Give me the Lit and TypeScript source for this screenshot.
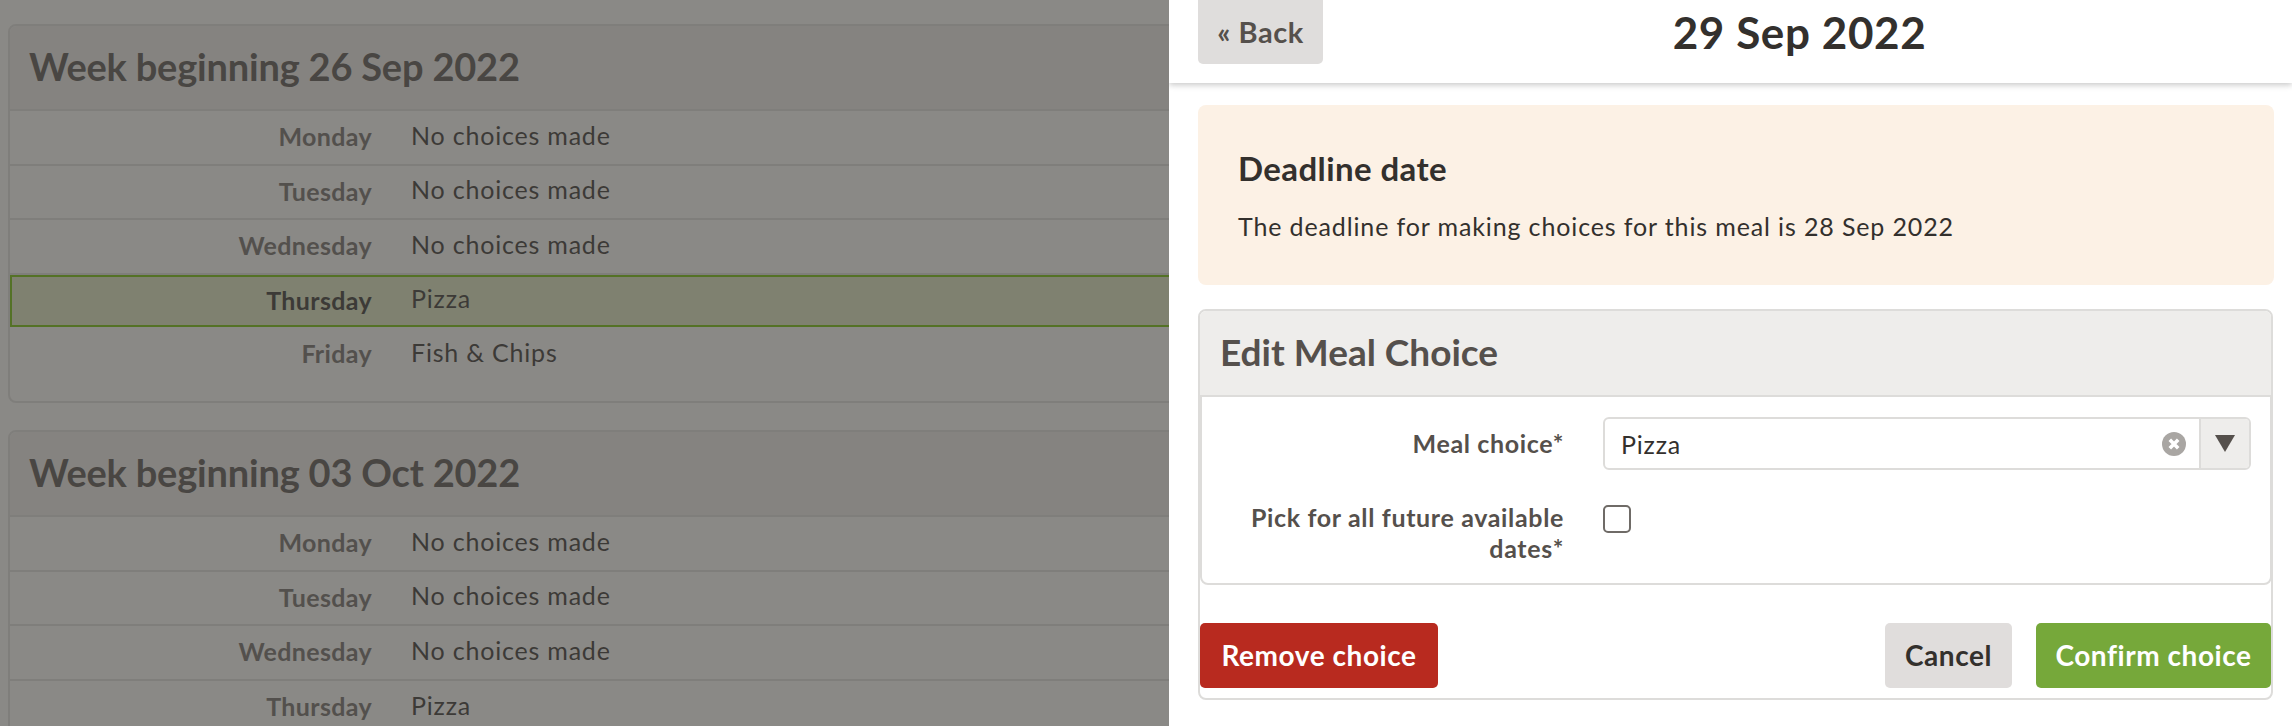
import { LitElement, css, html } from 'lit';
import { customElement } from 'lit/decorators.js';

const WEEKS = [
  {
    title: 'Week beginning 26 Sep 2022',
    days: [
      ['Monday', 'No choices made'],
      ['Tuesday', 'No choices made'],
      ['Wednesday', 'No choices made'],
      ['Thursday', 'Pizza', true],
      ['Friday', 'Fish & Chips'],
    ],
  },
  {
    title: 'Week beginning 03 Oct 2022',
    days: [
      ['Monday', 'No choices made'],
      ['Tuesday', 'No choices made'],
      ['Wednesday', 'No choices made'],
      ['Thursday', 'Pizza'],
    ],
  },
];

@customElement('app-root')
export class AppRoot extends LitElement {
  render() {
    return html`
      <div class="backdrop">
        ${WEEKS.map(
          (week) => html`
            <section class="week">
              <h2>${week.title}</h2>
              ${week.days.map(
                ([day, choice, current]) => html`
                  <div class="day ${current ? 'current' : ''}">
                    <span class="day-name">${day}</span>
                    <span class="day-choice">${choice}</span>
                  </div>
                `,
              )}
            </section>
          `,
        )}
      </div>

      <aside class="panel">
        <header class="top">
          <button class="btn back">« Back</button>
          <h1>29 Sep 2022</h1>
        </header>

        <div class="alert">
          <h3>Deadline date</h3>
          <p>The deadline for making choices for this meal is 28 Sep 2022</p>
        </div>

        <section class="edit">
          <h2>Edit Meal Choice</h2>
          <div class="fields">
            <div class="field">
              <label>Meal choice*</label>
              <div class="select">
                <span class="select-value">Pizza</span>
                <svg class="clear" width="24" height="24" viewBox="0 0 24 24">
                  <circle cx="12" cy="12" r="12" fill="#a9a6a3" />
                  <path d="M7.8 7.8l8.4 8.4M16.2 7.8l-8.4 8.4" stroke="#fff" stroke-width="3.6" />
                </svg>
                <span class="arrow">
                  <svg width="20" height="17" viewBox="0 0 20 17">
                    <path d="M0 0h20L10 17z" fill="#55504c" />
                  </svg>
                </span>
              </div>
            </div>
            <div class="field tall">
              <label>Pick for all future available<br />dates*</label>
              <span class="check"></span>
            </div>
          </div>
          <div class="actions">
            <button class="btn remove">Remove choice</button>
            <span class="spacer"></span>
            <button class="btn cancel">Cancel</button>
            <button class="btn confirm">Confirm choice</button>
          </div>
        </section>
      </aside>
    `;
  }

  static styles = css`
    :host {
      display: flex;
      width: 2292px;
      height: 726px;
      overflow: hidden;
      font-family: 'Lato', 'Noto Sans', sans-serif;
      font-size: 25px;
      letter-spacing: 0.8px;
      color: #33302d;
      background: #fff;
    }

    h1,
    h2,
    h3,
    p {
      margin: 0;
    }

    .backdrop {
      position: relative;
      flex: 0 0 1169px;
      box-sizing: border-box;
      padding: 24px 0 0 8px;
      overflow: hidden;
      background: #fcfbf9;
    }

    .backdrop::after {
      content: '';
      position: absolute;
      inset: 0;
      background: rgba(67, 65, 62, 0.617);
    }

    .week {
      width: 1400px;
      height: 379px;
      box-sizing: border-box;
      margin-bottom: 27px;
      border: 2px solid #e0dfdd;
      border-radius: 8px;
      overflow: hidden;
    }

    .week h2 {
      display: flex;
      align-items: center;
      height: 83px;
      padding: 0 0 3px 19px;
      box-sizing: border-box;
      font-size: 38px;
      font-weight: 700;
      letter-spacing: -0.2px;
      color: #55504c;
      background: #eeedeb;
    }

    .day {
      display: grid;
      grid-template-columns: 362px 1fr;
      column-gap: 39px;
      align-items: center;
      height: 54.6px;
      box-sizing: border-box;
      border-top: 2px solid #e0dfdd;
    }

    .day-name {
      margin-top: -2px;
      text-align: right;
      font-weight: 700;
      letter-spacing: 0.35px;
      color: #6e6a66;
    }

    .day-choice {
      margin-top: -5px;
    }

    .day.current {
      grid-template-columns: 360px 1fr;
      height: 52px;
      margin-top: 2px;
      border: 2px solid #70c000;
      background: #dfe8c1;
      box-shadow: 0 -2px 0 #e0dfdd;
    }

    .day.current .day-name {
      color: #33302d;
    }

    .day.current + .day {
      border-top: 0;
    }

    .panel {
      flex: 1;
      min-width: 0;
      background: #fff;
    }

    .top {
      display: flex;
      height: 83px;
      padding-left: 29px;
      box-shadow: 0 2px 6px rgba(0, 0, 0, 0.22);
    }

    .top h1 {
      flex: 1;
      padding: 6px 16px 0 0;
      text-align: center;
      font-size: 44px;
      font-weight: 700;
      letter-spacing: 0.6px;
    }

    .btn {
      height: 65px;
      padding: 0 0 2px;
      border: 0;
      border-radius: 5px;
      font: inherit;
      font-size: 28px;
      font-weight: 700;
      letter-spacing: 0.55px;
    }

    .back {
      width: 125px;
      height: 64px;
      font-size: 29px;
      color: #55504c;
      background: #dfdddc;
      border-radius: 0 0 5px 5px;
    }

    .alert {
      box-sizing: border-box;
      width: 1076px;
      height: 180px;
      margin: 22px 0 24px 29px;
      padding: 43px 40px 0;
      border-radius: 8px;
      background: #fcf1e5;
    }

    .alert h3 {
      font-size: 33px;
      font-weight: 700;
      letter-spacing: 0.4px;
    }

    .alert p {
      margin-top: 23px;
      letter-spacing: 0.87px;
    }

    .edit {
      box-sizing: border-box;
      width: 1075px;
      height: 391px;
      margin-left: 29px;
      border: 2px solid #dddcda;
      border-radius: 8px;
    }

    .edit h2 {
      display: flex;
      align-items: center;
      height: 84px;
      padding: 0 0 3px 20px;
      box-sizing: border-box;
      font-size: 37px;
      font-weight: 700;
      letter-spacing: 0;
      color: #55504c;
      background: #eeedeb;
      border-radius: 6px 6px 0 0;
    }

    .fields {
      box-sizing: border-box;
      height: 190px;
      margin-right: -1px;
      padding-top: 20px;
      border: 2px solid #dddcda;
      border-radius: 0 0 8px 8px;
    }

    .field {
      display: grid;
      grid-template-columns: 362px 1fr;
      column-gap: 39px;
      align-items: center;
    }

    .field.tall {
      align-items: start;
      margin-top: 32px;
    }

    label {
      text-align: right;
      font-weight: 700;
      line-height: 31px;
      letter-spacing: 0.65px;
      color: #55504c;
    }

    .select {
      display: flex;
      align-items: center;
      box-sizing: border-box;
      width: 648px;
      height: 53px;
      border: 2px solid #dddcda;
      border-radius: 6px;
      overflow: hidden;
    }

    .select-value {
      flex: 1;
      padding-left: 16px;
    }

    .clear {
      margin-right: 13px;
    }

    .arrow {
      display: flex;
      align-items: center;
      justify-content: center;
      width: 48px;
      height: 100%;
      border-left: 2px solid #dddcda;
      background: #eeedeb;
    }

    .check {
      box-sizing: border-box;
      width: 28px;
      height: 28px;
      margin-top: 3px;
      border: 2px solid #6f6b67;
      border-radius: 5px;
    }

    .actions {
      display: flex;
      gap: 24px;
      margin-top: 38px;
    }

    .spacer {
      flex: 1;
    }

    .remove {
      width: 238px;
      color: #fff;
      background: #b82a1f;
    }

    .cancel {
      width: 127px;
      color: #33302d;
      background: #e0dddc;
    }

    .confirm {
      width: 235px;
      color: #fff;
      background: #76a83a;
    }
  `;
}
